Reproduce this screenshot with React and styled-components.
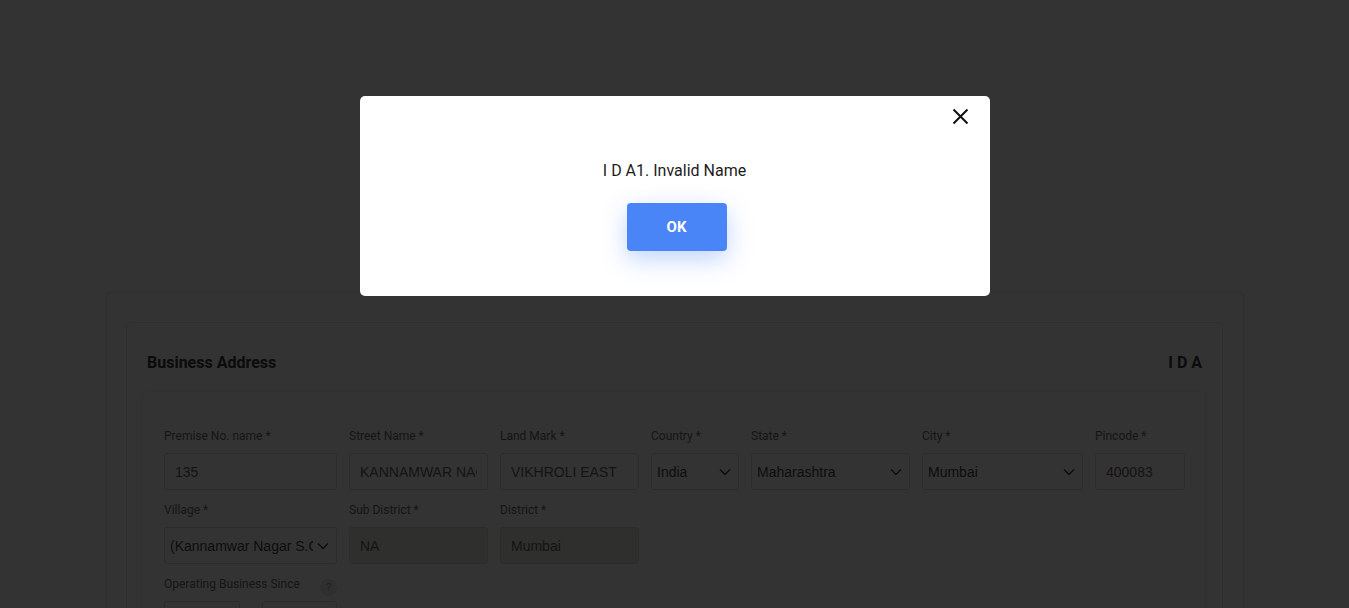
import React from 'react';
import styled, { createGlobalStyle } from 'styled-components';

const GlobalStyle = createGlobalStyle`
  html, body {
    margin: 0;
    padding: 0;
    overflow: hidden;
    background: #fff;
    font-family: Roboto, 'Liberation Sans', Arial, sans-serif;
  }
  * {
    box-sizing: border-box;
  }
`;

const Page = styled.div`
  padding: 292px 105px 0 106px;
  min-height: 100vh;
`;

const OuterCard = styled.div`
  border: 1px solid #e8e8e8;
  border-radius: 4px;
  padding: 29px 20px 40px 19px;
  box-shadow: 0 0 8px rgba(0, 0, 0, 0.04);
`;

const InnerCard = styled.div`
  border: 1px solid #e6e6e6;
  border-radius: 4px;
  padding: 30px 18px 40px 16px;
`;

const TitleRow = styled.div`
  display: flex;
  justify-content: space-between;
  align-items: center;
  padding: 0 2px 0 4px;
  height: 20px;
  margin-bottom: 19px;
`;

const Title = styled.h3`
  margin: 0;
  font-size: 16px;
  font-weight: 700;
  color: #3a3a3a;
  line-height: 20px;
`;

const Section = styled.div`
  border-radius: 4px;
  box-shadow: 0 0 6px rgba(0, 0, 0, 0.09);
  padding: 37px 16px 40px 21px;
  display: flex;
  flex-direction: column;
  gap: 13px;
`;

const Row = styled.div`
  display: flex;
  gap: ${(p) => p.$gap || 12}px;
`;

const Field = styled.div`
  flex: none;
  width: ${(p) => p.$w}px;
  display: flex;
  flex-direction: column;
`;

const LabelRow = styled.div`
  display: flex;
  justify-content: space-between;
  align-items: center;
  height: 14px;
  margin-bottom: 10px;
`;

const Label = styled.label`
  font-size: 12px;
  line-height: 14px;
  color: #6a6a6a;
  white-space: nowrap;
`;

const Help = styled.span`
  width: 17px;
  height: 17px;
  border-radius: 50%;
  background: #e9e9e9;
  color: #a0a0a0;
  font-size: 11px;
  display: flex;
  align-items: center;
  justify-content: center;
  margin-top: 6px;
`;

const Box = styled.div`
  flex: none;
  height: 37px;
  width: 100%;
  border: 1px solid #dcdcdc;
  border-radius: 3px;
  background: ${(p) => (p.$disabled ? '#ebebe4' : '#fff')};
  display: flex;
  align-items: center;
  overflow: hidden;
`;

const TextBox = styled(Box)`
  padding: 0 10px;
`;

const DateBox = styled(Box)`
  flex: 1;
  width: auto;
`;

const InputText = styled.span`
  font-family: 'Liberation Sans', Arial, sans-serif;
  font-size: 14px;
  color: #666;
  white-space: nowrap;
  overflow: hidden;
`;

const SelectText = styled.span`
  flex: 1;
  padding-left: 5px;
  font-family: 'Liberation Sans', Arial, sans-serif;
  font-size: 14px;
  color: #444;
  white-space: nowrap;
  overflow: hidden;
`;

const Chevron = styled.svg`
  flex: none;
  margin: 0 7px 0 4px;
`;

const Overlay = styled.div`
  position: fixed;
  inset: 0;
  background: rgba(0, 0, 0, 0.8);
  display: flex;
  justify-content: center;
  align-items: flex-start;
  padding-top: 96px;
`;

const Dialog = styled.div`
  position: relative;
  width: 630px;
  height: 200px;
  background: #fff;
  border-radius: 5px;
  padding-top: 65px;
  display: flex;
  flex-direction: column;
  align-items: center;
`;

const Close = styled.button`
  position: absolute;
  top: 10px;
  right: 19px;
  width: 20px;
  height: 20px;
  padding: 0;
  border: none;
  background: transparent;
  display: flex;
  align-items: center;
  justify-content: center;
  cursor: pointer;
`;

const Message = styled.p`
  margin: 0 0 22px;
  font-size: 16px;
  line-height: 20px;
  color: #1c1c1c;
`;

const OkButton = styled.button`
  width: 100px;
  height: 48px;
  margin-left: 4px;
  border: none;
  border-radius: 4px;
  background: #4a85f7;
  color: #fff;
  font-family: Roboto, sans-serif;
  font-size: 15px;
  font-weight: 700;
  box-shadow: 0 8px 24px rgba(74, 133, 247, 0.35);
  cursor: pointer;
`;

const ChevronIcon = () => (
  <Chevron width="12" height="8" viewBox="0 0 12 8">
    <path d="M1 1.5 L6 6.5 L11 1.5" fill="none" stroke="#444" strokeWidth="1.4" />
  </Chevron>
);

const TextField = ({ label, value, w, disabled }) => (
  <Field $w={w}>
    <LabelRow>
      <Label>{label}</Label>
    </LabelRow>
    <TextBox $disabled={disabled}>
      <InputText>{value}</InputText>
    </TextBox>
  </Field>
);

const SelectField = ({ label, value, w }) => (
  <Field $w={w}>
    <LabelRow>
      <Label>{label}</Label>
    </LabelRow>
    <Box>
      <SelectText>{value}</SelectText>
      <ChevronIcon />
    </Box>
  </Field>
);

const App = () => {
  return (
    <>
      <GlobalStyle />
      <Page>
        <OuterCard>
          <InnerCard>
            <TitleRow>
              <Title>Business Address</Title>
              <Title>I D A</Title>
            </TitleRow>
            <Section>
              <Row>
                <TextField w={173} label="Premise No. name *" value="135" />
                <TextField w={139} label="Street Name *" value="KANNAMWAR NAGAR" />
                <TextField w={139} label="Land Mark *" value="VIKHROLI EAST" />
                <SelectField w={88} label="Country *" value="India" />
                <SelectField w={159} label="State *" value="Maharashtra" />
                <SelectField w={161} label="City *" value="Mumbai" />
                <TextField w={90} label="Pincode *" value="400083" />
              </Row>
              <Row>
                <SelectField w={173} label="Village *" value="(Kannamwar Nagar S.O)" />
                <TextField w={139} label="Sub District *" value="NA" disabled />
                <TextField w={139} label="District *" value="Mumbai" disabled />
              </Row>
              <Field $w={173}>
                <LabelRow>
                  <Label>Operating Business Since</Label>
                  <Help>?</Help>
                </LabelRow>
                <Row $gap={22}>
                  <DateBox />
                  <DateBox />
                </Row>
              </Field>
            </Section>
          </InnerCard>
        </OuterCard>
      </Page>
      <Overlay>
        <Dialog role="dialog">
          <Close aria-label="Close">
            <svg width="17" height="17" viewBox="0 0 17 17">
              <path d="M1.5 1.5 L15.5 15.5 M15.5 1.5 L1.5 15.5" stroke="#111" strokeWidth="2" />
            </svg>
          </Close>
          <Message>I D A1. Invalid Name</Message>
          <OkButton>OK</OkButton>
        </Dialog>
      </Overlay>
    </>
  );
};

export default App;
